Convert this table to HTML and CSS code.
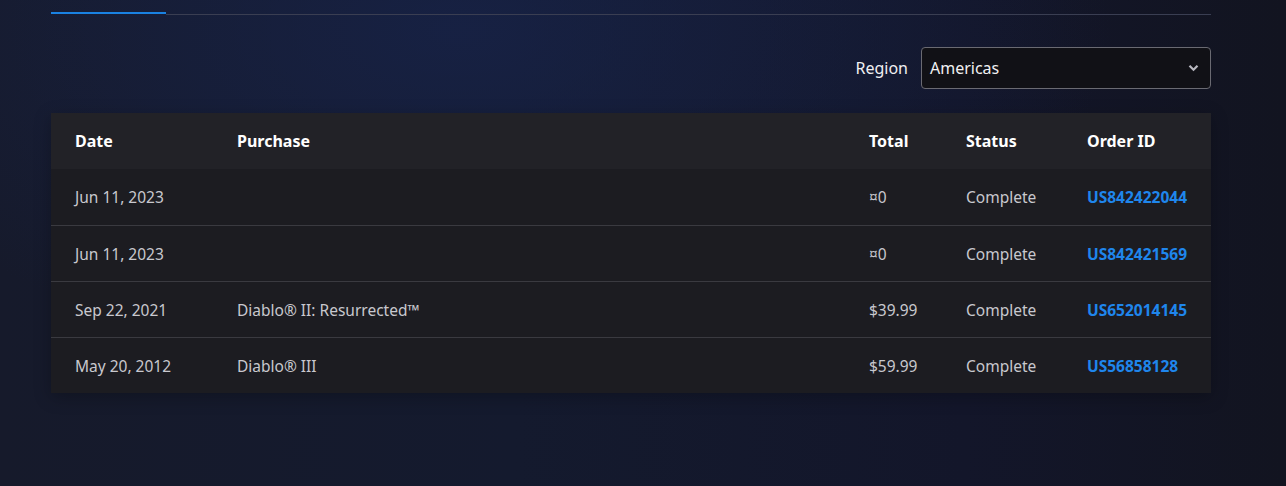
FILE: index.html
```html
<!DOCTYPE html>
<html lang="en">
<head>
<meta charset="utf-8">
<link rel="stylesheet" href="styles.css">
</head>
<body>
<div class="page">
  <div class="tabs">
    <div class="tab-active"></div>
    <div class="tab-rest"></div>
  </div>
  <div class="filter">
    <label class="filter-label">Region</label>
    <div class="select">
      <span>Americas</span>
      <svg class="chev" width="11" height="8" viewBox="0 0 11 8"><path d="M1.5 1.8 L5.5 5.8 L9.5 1.8" fill="none" stroke="#b8b8c0" stroke-width="2.2"/></svg>
    </div>
  </div>
  <div class="table">
    <div class="row head">
      <div>Date</div><div>Purchase</div><div>Total</div><div>Status</div><div>Order ID</div>
    </div>
    <div class="row">
      <div>Jun 11, 2023</div><div></div><div>¤0</div><div>Complete</div><div class="link">US842422044</div>
    </div>
    <div class="row">
      <div>Jun 11, 2023</div><div></div><div>¤0</div><div>Complete</div><div class="link">US842421569</div>
    </div>
    <div class="row">
      <div>Sep 22, 2021</div><div>Diablo® II: Resurrected™</div><div>$39.99</div><div>Complete</div><div class="link">US652014145</div>
    </div>
    <div class="row last">
      <div>May 20, 2012</div><div>Diablo® III</div><div>$59.99</div><div>Complete</div><div class="link">US56858128</div>
    </div>
  </div>
</div>
</body>
</html>
```
FILE: styles.css
```css
html, body {
  margin: 0;
  height: 100%;
}
body {
  font-family: "Noto Sans", "Open Sans", sans-serif;
  background:
    radial-gradient(ellipse 650px 340px at 460px 30px, rgba(24, 36, 76, 0.7), rgba(24, 36, 76, 0) 100%),
    linear-gradient(90deg, #161a2b 0%, #141a2e 40%, #13162a 75%, #121420 100%);
  color: #c8c8ce;
  overflow: hidden;
}
.page {
  width: 1160px;
  margin-left: 51px;
  padding-top: 12px;
}
.tabs {
  display: flex;
  align-items: flex-start;
  height: 3px;
}
.tab-active {
  width: 115px;
  height: 2px;
  background: #1a82e2;
}
.tab-rest {
  flex: 1;
  height: 1px;
  margin-top: 2px;
  background: #3a3e52;
}
.filter {
  display: flex;
  justify-content: flex-end;
  align-items: center;
  gap: 13px;
  margin-top: 32px;
}
.filter-label {
  font-size: 16px;
  color: #f0f0f2;
}
.select {
  box-sizing: border-box;
  width: 290px;
  height: 42px;
  border: 1px solid #6a6a72;
  border-radius: 4px;
  background: #111116;
  display: flex;
  align-items: center;
  justify-content: space-between;
  padding: 0 11px 0 8px;
  font-size: 16px;
  color: #f0f0f2;
}
.chev {
  display: block;
}
.table {
  margin-top: 24px;
  box-shadow: 0 4px 16px rgba(0, 0, 0, 0.25);
}
.row {
  display: grid;
  grid-template-columns: 162px 632px 97px 121px 148px;
  height: 56px;
  align-items: center;
  background: #1c1c21;
  border-top: 1px solid #3a3a40;
  box-sizing: border-box;
  font-size: 15.5px;
}
.row > div {
  padding-left: 24px;
  white-space: nowrap;
}
.row.head {
  background: #222227;
  border-top: none;
  color: #ffffff;
  font-weight: 700;
  font-size: 16px;
}
.row.head + .row {
  border-top: none;
}
.link {
  color: #1f86ec;
  font-weight: 700;
}
```
